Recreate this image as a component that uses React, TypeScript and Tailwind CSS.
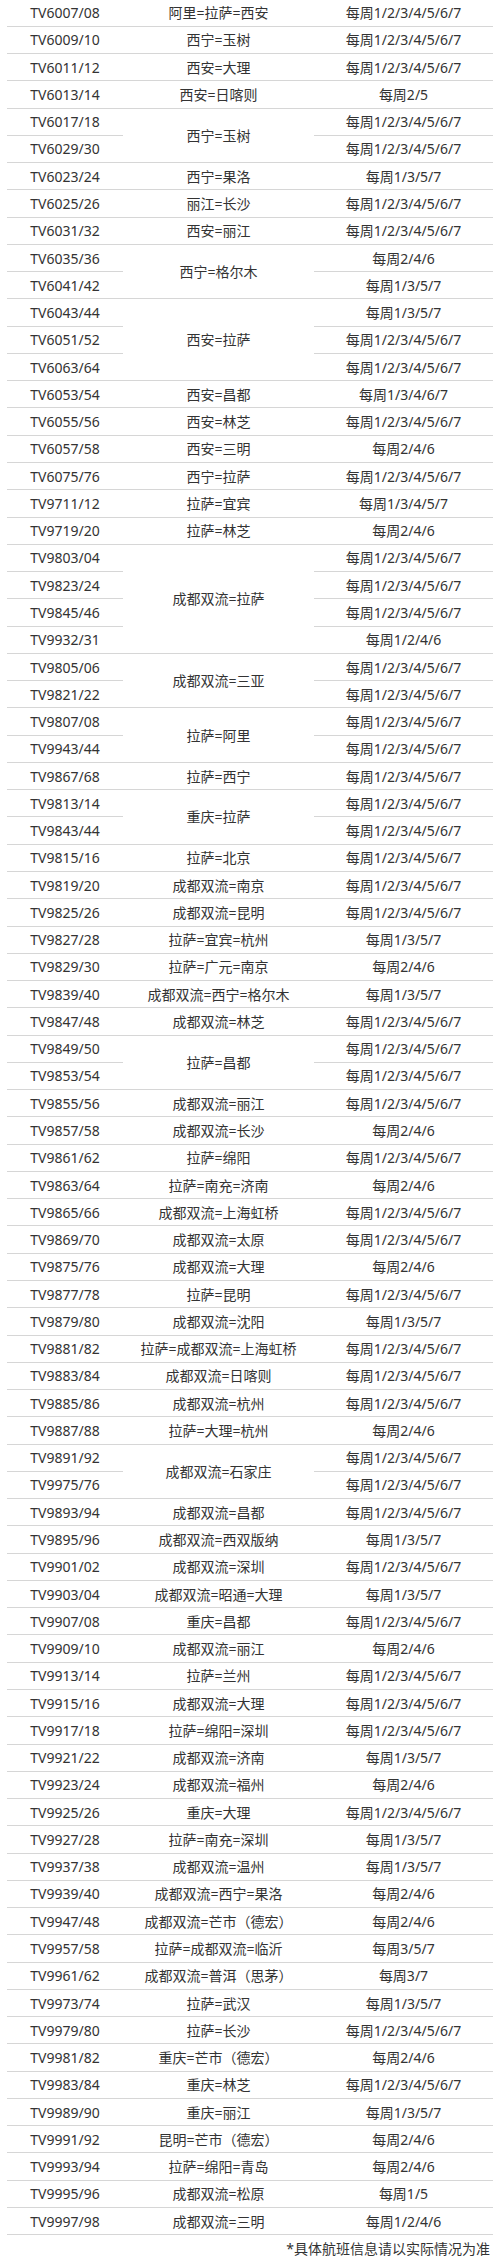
type Row = {
  no: string
  route?: string
  span?: number
  days: string
}

const ALL = '每周1/2/3/4/5/6/7'

const ROWS: Row[] = [
  { no: 'TV6007/08', route: '阿里=拉萨=西安', days: ALL },
  { no: 'TV6009/10', route: '西宁=玉树', days: ALL },
  { no: 'TV6011/12', route: '西安=大理', days: ALL },
  { no: 'TV6013/14', route: '西安=日喀则', days: '每周2/5' },
  { no: 'TV6017/18', route: '西宁=玉树', span: 2, days: ALL },
  { no: 'TV6029/30', days: ALL },
  { no: 'TV6023/24', route: '西宁=果洛', days: '每周1/3/5/7' },
  { no: 'TV6025/26', route: '丽江=长沙', days: ALL },
  { no: 'TV6031/32', route: '西安=丽江', days: ALL },
  { no: 'TV6035/36', route: '西宁=格尔木', span: 2, days: '每周2/4/6' },
  { no: 'TV6041/42', days: '每周1/3/5/7' },
  { no: 'TV6043/44', route: '西安=拉萨', span: 3, days: '每周1/3/5/7' },
  { no: 'TV6051/52', days: ALL },
  { no: 'TV6063/64', days: ALL },
  { no: 'TV6053/54', route: '西安=昌都', days: '每周1/3/4/6/7' },
  { no: 'TV6055/56', route: '西安=林芝', days: ALL },
  { no: 'TV6057/58', route: '西安=三明', days: '每周2/4/6' },
  { no: 'TV6075/76', route: '西宁=拉萨', days: ALL },
  { no: 'TV9711/12', route: '拉萨=宜宾', days: '每周1/3/4/5/7' },
  { no: 'TV9719/20', route: '拉萨=林芝', days: '每周2/4/6' },
  { no: 'TV9803/04', route: '成都双流=拉萨', span: 4, days: ALL },
  { no: 'TV9823/24', days: ALL },
  { no: 'TV9845/46', days: ALL },
  { no: 'TV9932/31', days: '每周1/2/4/6' },
  { no: 'TV9805/06', route: '成都双流=三亚', span: 2, days: ALL },
  { no: 'TV9821/22', days: ALL },
  { no: 'TV9807/08', route: '拉萨=阿里', span: 2, days: ALL },
  { no: 'TV9943/44', days: ALL },
  { no: 'TV9867/68', route: '拉萨=西宁', days: ALL },
  { no: 'TV9813/14', route: '重庆=拉萨', span: 2, days: ALL },
  { no: 'TV9843/44', days: ALL },
  { no: 'TV9815/16', route: '拉萨=北京', days: ALL },
  { no: 'TV9819/20', route: '成都双流=南京', days: ALL },
  { no: 'TV9825/26', route: '成都双流=昆明', days: ALL },
  { no: 'TV9827/28', route: '拉萨=宜宾=杭州', days: '每周1/3/5/7' },
  { no: 'TV9829/30', route: '拉萨=广元=南京', days: '每周2/4/6' },
  { no: 'TV9839/40', route: '成都双流=西宁=格尔木', days: '每周1/3/5/7' },
  { no: 'TV9847/48', route: '成都双流=林芝', days: ALL },
  { no: 'TV9849/50', route: '拉萨=昌都', span: 2, days: ALL },
  { no: 'TV9853/54', days: ALL },
  { no: 'TV9855/56', route: '成都双流=丽江', days: ALL },
  { no: 'TV9857/58', route: '成都双流=长沙', days: '每周2/4/6' },
  { no: 'TV9861/62', route: '拉萨=绵阳', days: ALL },
  { no: 'TV9863/64', route: '拉萨=南充=济南', days: '每周2/4/6' },
  { no: 'TV9865/66', route: '成都双流=上海虹桥', days: ALL },
  { no: 'TV9869/70', route: '成都双流=太原', days: ALL },
  { no: 'TV9875/76', route: '成都双流=大理', days: '每周2/4/6' },
  { no: 'TV9877/78', route: '拉萨=昆明', days: ALL },
  { no: 'TV9879/80', route: '成都双流=沈阳', days: '每周1/3/5/7' },
  { no: 'TV9881/82', route: '拉萨=成都双流=上海虹桥', days: ALL },
  { no: 'TV9883/84', route: '成都双流=日喀则', days: ALL },
  { no: 'TV9885/86', route: '成都双流=杭州', days: ALL },
  { no: 'TV9887/88', route: '拉萨=大理=杭州', days: '每周2/4/6' },
  { no: 'TV9891/92', route: '成都双流=石家庄', span: 2, days: ALL },
  { no: 'TV9975/76', days: ALL },
  { no: 'TV9893/94', route: '成都双流=昌都', days: ALL },
  { no: 'TV9895/96', route: '成都双流=西双版纳', days: '每周1/3/5/7' },
  { no: 'TV9901/02', route: '成都双流=深圳', days: ALL },
  { no: 'TV9903/04', route: '成都双流=昭通=大理', days: '每周1/3/5/7' },
  { no: 'TV9907/08', route: '重庆=昌都', days: ALL },
  { no: 'TV9909/10', route: '成都双流=丽江', days: '每周2/4/6' },
  { no: 'TV9913/14', route: '拉萨=兰州', days: ALL },
  { no: 'TV9915/16', route: '成都双流=大理', days: ALL },
  { no: 'TV9917/18', route: '拉萨=绵阳=深圳', days: ALL },
  { no: 'TV9921/22', route: '成都双流=济南', days: '每周1/3/5/7' },
  { no: 'TV9923/24', route: '成都双流=福州', days: '每周2/4/6' },
  { no: 'TV9925/26', route: '重庆=大理', days: ALL },
  { no: 'TV9927/28', route: '拉萨=南充=深圳', days: '每周1/3/5/7' },
  { no: 'TV9937/38', route: '成都双流=温州', days: '每周1/3/5/7' },
  { no: 'TV9939/40', route: '成都双流=西宁=果洛', days: '每周2/4/6' },
  { no: 'TV9947/48', route: '成都双流=芒市（德宏）', days: '每周2/4/6' },
  { no: 'TV9957/58', route: '拉萨=成都双流=临沂', days: '每周3/5/7' },
  { no: 'TV9961/62', route: '成都双流=普洱（思茅）', days: '每周3/7' },
  { no: 'TV9973/74', route: '拉萨=武汉', days: '每周1/3/5/7' },
  { no: 'TV9979/80', route: '拉萨=长沙', days: ALL },
  { no: 'TV9981/82', route: '重庆=芒市（德宏）', days: '每周2/4/6' },
  { no: 'TV9983/84', route: '重庆=林芝', days: ALL },
  { no: 'TV9989/90', route: '重庆=丽江', days: '每周1/3/5/7' },
  { no: 'TV9991/92', route: '昆明=芒市（德宏）', days: '每周2/4/6' },
  { no: 'TV9993/94', route: '拉萨=绵阳=青岛', days: '每周2/4/6' },
  { no: 'TV9995/96', route: '成都双流=松原', days: '每周1/5' },
  { no: 'TV9997/98', route: '成都双流=三明', days: '每周1/2/4/6' },
]

const cell = 'border-b border-[#d6d6d6] p-0 text-center align-middle'

export default function App() {
  return (
    <div
      className="min-h-[2263px] w-[500px] overflow-hidden bg-white text-[14px] text-[#333333]"
      style={{ fontFamily: '"Noto Sans", "Noto Sans CJK SC", sans-serif' }}
    >
      <div className="-mt-px px-[7px]">
        <table className="w-[486px] table-fixed border-collapse">
          <colgroup>
            <col className="w-[116px]" />
            <col className="w-[191px]" />
            <col className="w-[179px]" />
          </colgroup>
          <tbody>
            {ROWS.map((row) => (
              <tr key={row.no} className="h-[27.28px]">
                <td className={cell}>{row.no}</td>
                {row.route ? (
                  <td className={cell} rowSpan={row.span || 1}>
                    {row.route}
                  </td>
                ) : null}
                <td className={cell}>{row.days}</td>
              </tr>
            ))}
          </tbody>
        </table>

        <p className="flex h-[27px] items-center justify-end pr-[3px] leading-none">
          *具体航班信息请以实际情况为准
        </p>
      </div>
    </div>
  )
}
